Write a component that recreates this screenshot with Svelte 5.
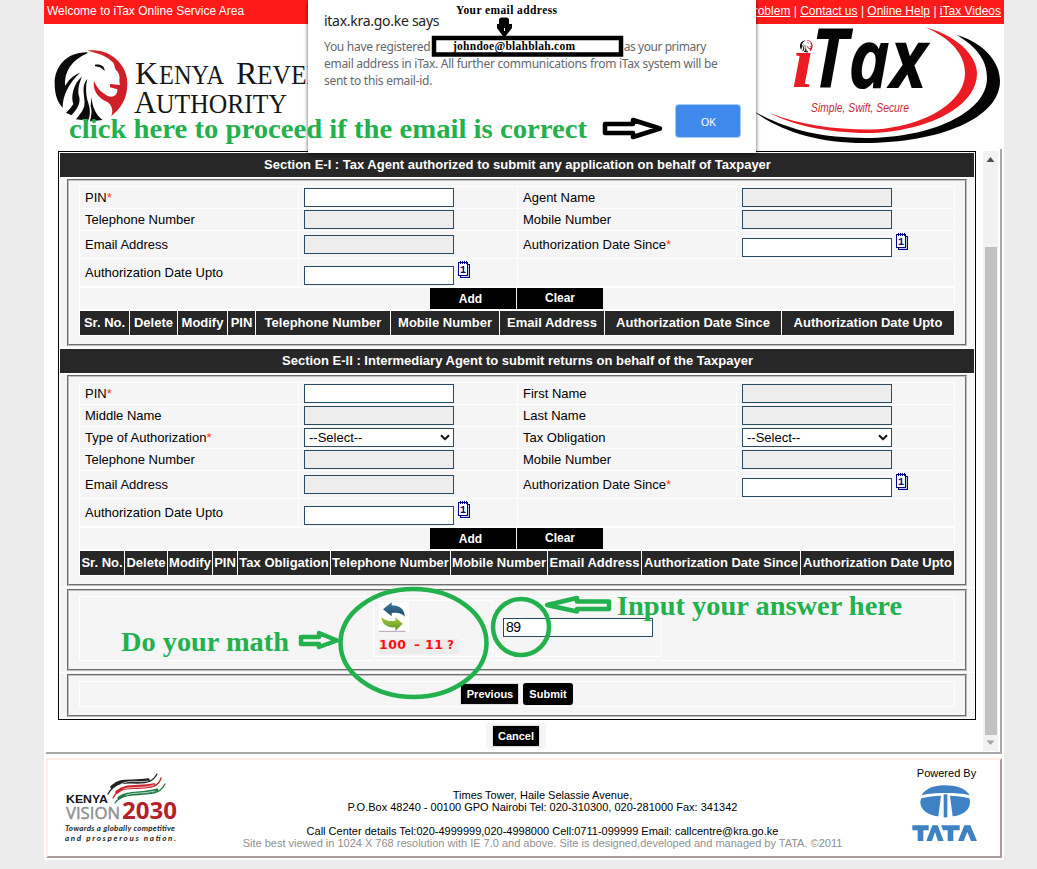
<script>
  const agent = [
    [{ label: 'PIN', req: true, kind: 'open' }, { label: 'Agent Name', kind: 'off' }],
    [{ label: 'Telephone Number', kind: 'off' }, { label: 'Mobile Number', kind: 'off' }],
    [{ label: 'Email Address', kind: 'off', tall: true }, { label: 'Authorization Date Since', req: true, kind: 'date', tall: true }],
    [{ label: 'Authorization Date Upto', kind: 'date', tall: true }, null]
  ];
  const intermediary = [
    [{ label: 'PIN', req: true, kind: 'open' }, { label: 'First Name', kind: 'off' }],
    [{ label: 'Middle Name', kind: 'off' }, { label: 'Last Name', kind: 'off' }],
    [{ label: 'Type of Authorization', req: true, kind: 'select' }, { label: 'Tax Obligation', kind: 'select' }],
    [{ label: 'Telephone Number', kind: 'off' }, { label: 'Mobile Number', kind: 'off' }],
    [{ label: 'Email Address', kind: 'off', tall: true }, { label: 'Authorization Date Since', req: true, kind: 'date', tall: true }],
    [{ label: 'Authorization Date Upto', kind: 'date', tall: true }, null]
  ];
  const sections = [
    {
      title: 'Section E-I : Tax Agent authorized to submit any application on behalf of Taxpayer',
      rows: agent,
      heads: [['Sr. No.', 49], ['Delete', 47], ['Modify', 49], ['PIN', 27], ['Telephone Number', 134], ['Mobile Number', 108], ['Email Address', 104], ['Authorization Date Since', 176], ['Authorization Date Upto', 172]]
    },
    {
      title: 'Section E-II : Intermediary Agent to submit returns on behalf of the Taxpayer',
      rows: intermediary,
      heads: [['Sr. No.', 44], ['Delete', 42], ['Modify', 44], ['PIN', 24], ['Tax Obligation', 92], ['Telephone Number', 119], ['Mobile Number', 96], ['Email Address', 93], ['Authorization Date Since', 158], ['Authorization Date Upto', 153]]
    }
  ];
</script>

{#snippet lion()}
  <path d="M262 157C200 156 164 200 164 250C164 285 173 308 188 323C188 290 202 254 240 218C216 228 206 240 195 258C192 215 215 180 262 160Z" fill="#0b0b0b" />
  <path d="M246 230C220 250 212 290 220 312C213 324 203 333 198 338L214 346C234 325 244 306 236 285C233 265 238 248 246 230Z" fill="#0b0b0b" />
  <path d="M262 237C240 262 258 294 253 318C246 338 236 347 228 358L264 362C275 340 268 318 262 300C258 280 256 258 262 237Z" fill="#0b0b0b" />
  <path d="M274 290C277 322 288 345 308 360L270 364C274 345 277 335 272 318Z" fill="#0b0b0b" />
  <path d="M262 152C325 142 382 190 382 250C382 298 362 326 334 348C342 328 333 308 314 302C290 288 278 268 282 242C290 262 302 276 322 287C340 296 354 284 352 268L330 262V252L360 255C355 240 364 230 352 214C340 204 348 192 333 182C316 166 290 158 262 152Z" fill="#cf2027" />
  <path d="M285 194C302 191 314 198 314 213C306 204 298 200 285 199Z" fill="#0b0b0b" />
{/snippet}

{#snippet control(f)}
  {#if f.kind === 'select'}
    <div class="box picker"><span>--Select--</span>
      <svg width="10" height="7" viewBox="0 0 10 7"><path d="M1 1.3L5 5.2L9 1.3" fill="none" stroke="#111" stroke-width="2" /></svg>
    </div>
  {:else}
    <div class="box {f.kind}"></div>
    {#if f.kind === 'date'}
      <svg class="cal" width="12" height="17" viewBox="0 0 12 17" shape-rendering="crispEdges">
        <rect x="2.5" y="3.5" width="9" height="13" fill="#c9c9ee" stroke="#00008b" />
        <rect x="0.5" y="1.5" width="9" height="13" fill="#fff" stroke="#00008b" />
        <path d="M2.5 0V3M4.5 0V3M6.5 0V3M8.5 0V3" stroke="#00008b" />
        <text x="2" y="11.5" font-size="10" font-weight="700" font-family="Liberation Mono" fill="#00008b">1</text>
      </svg>
    {/if}
  {/if}
{/snippet}

<div class="screen">
  <div class="page">
    <div class="topbar">
      <span class="welcome">Welcome to iTax Online Service Area</span>
      <nav><u>Problem</u> | <u>Contact us</u> | <u>Online Help</u> | <u>iTax Videos</u></nav>
    </div>

    <header>
      <svg class="kra" width="300" height="100" viewBox="0 0 300 100">
        <g transform="translate(0 3) scale(.33333)"><g transform="translate(-150 -135)">{@render lion()}</g></g>
        <g font-family="Liberation Serif" fill="#161616">
          <text x="85" y="42" font-size="32">K</text>
          <text x="109" y="42" font-size="27.5" textLength="65" lengthAdjust="spacingAndGlyphs">ENYA</text>
          <text x="186" y="42" font-size="32">R</text>
          <text x="207" y="42" font-size="27.5" textLength="68" lengthAdjust="spacingAndGlyphs">EVEN</text>
          <text x="84" y="71" font-size="31">A</text>
          <text x="106" y="71" font-size="27" textLength="131" lengthAdjust="spacingAndGlyphs">UTHORITY</text>
        </g>
      </svg>
      <svg class="itax" width="250" height="125" viewBox="752 24 250 125">
        <path d="M925 27C964 38 977 60 977 73C977 112 915 133 868 133C825 133 790 124 770 113C800 125 835 129.500 868 129.500C915 129.500 965 106 965 73C965 55 952 39 925 27Z" fill="#ec1c24" />
        <path d="M957 35C986 44 1000 63 1000 81C1000 118 940 143 864 143C815 143 778 130 752 110C782 128 818 138 866 138C930 138 987 113 987 78C987 61 978 48 957 35Z" fill="#050505" />
        <text x="811" y="88" font-family="Open Sans" font-weight="700" font-style="italic" font-size="82" textLength="116" lengthAdjust="spacingAndGlyphs" fill="#050505">Tax</text>
        <text x="792" y="87" font-family="Liberation Serif" font-weight="700" font-style="italic" font-size="73" textLength="22" lengthAdjust="spacingAndGlyphs" fill="#ec1c24">ı</text>
        <g transform="translate(800 40) scale(.058)"><g transform="translate(-164 -150)">{@render lion()}</g></g>
        <text x="811" y="112" font-family="Liberation Sans Narrow, Liberation Sans" font-style="italic" font-size="12.500" textLength="98" lengthAdjust="spacingAndGlyphs" fill="#cc2a33">Simple, Swift, Secure</text>
      </svg>
    </header>

    <main>
      <div class="content">
        <div class="form">
          {#each sections as s}
            <h2>{s.title}</h2>
            <div class="panel">
              <div class="group">
                <div class="fields">
                  {#each s.rows as row}
                    {#each row as f}
                      {#if f}
                        <div class="cell label" class:tall={f.tall}>{f.label}{#if f.req}<i>*</i>{/if}</div>
                        <div class="cell ctl {f.kind}" class:tall={f.tall}>{@render control(f)}</div>
                      {:else}
                        <div class="cell wide tall"></div>
                      {/if}
                    {/each}
                  {/each}
                </div>
                <div class="actions"><b>Add</b><b class="clear">Clear</b></div>
                <div class="heads">
                  {#each s.heads as [name, w]}<div style="width:{w}px">{name}</div>{/each}
                </div>
              </div>
            </div>
          {/each}
          <div class="panel third">
            <div class="group">
              <div class="captcha">
                <div class="question">
                  <svg width="30" height="30" viewBox="0 0 90 90">
                    <defs>
                      <linearGradient id="blue" x2="0" y2="1"><stop stop-color="#3f7ca0" /><stop offset="1" stop-color="#1c4a68" /></linearGradient>
                      <linearGradient id="lime" x2="0" y2="1"><stop stop-color="#a5c94b" /><stop offset="1" stop-color="#5f941d" /></linearGradient>
                    </defs>
                    <rect width="90" height="90" fill="#fff" />
                    <path d="M12 22L38 1V10C63 10 77 22 77 44C68 33 57 31 38 33V43Z" fill="url(#blue)" />
                    <path d="M71 65L49 87V76C25 78 8 66 7 45C18 56 31 58 49 56V46Z" fill="url(#lime)" />
                    <path d="M0 88H80" stroke="#b7a0bd" stroke-width="3" />
                  </svg>
                  <svg class="sum" width="80" height="15">
                    <g font-family="DejaVu Sans" font-weight="700" font-size="12.500" fill="#fb0d0d">
                      <text x="0" y="10" textLength="27">100</text>
                      <text x="35" y="10" textLength="6" lengthAdjust="spacingAndGlyphs">–</text>
                      <text x="46" y="10" textLength="18">11</text>
                      <text x="68" y="10" textLength="7" lengthAdjust="spacingAndGlyphs">?</text>
                    </g>
                  </svg>
                </div>
                <div class="answer"><div class="box open">89</div></div>
              </div>
            </div>
          </div>
          <div class="panel fourth">
            <div class="group">
              <div class="submits"><b class="prev">Previous</b><b class="submit">Submit</b></div>
            </div>
          </div>
        </div>
        <div class="cancel"><b>Cancel</b></div>
      </div>
      <div class="scroll">
        <svg width="15" height="16"><path d="M3.500 11L7.500 6L11.500 11Z" fill="#505050" /></svg>
        <div class="thumb"></div>
        <svg width="15" height="16"><path d="M3.500 5.500L7.500 10L11.500 5.500Z" fill="#a3a3a3" /></svg>
      </div>
    </main>

    <footer>
      <svg class="vision" width="130" height="80" viewBox="0 0 130 80">
        <g fill="none" stroke-linecap="round">
          <path d="M44 22C52 8 61 11 73 11C85 11 89 9 93 2" stroke="#222" stroke-width="1.300" />
          <path d="M48 15C57 6 66 11 84 8" stroke="#222" stroke-width="3.500" />
          <path d="M49 26C55 14 65 17 76 16C88 16 95 14 97 6" stroke="#c7242d" stroke-width="1.300" />
          <path d="M53 20C62 12 74 16 90 13" stroke="#c7242d" stroke-width="3.500" />
          <path d="M51 31C58 21 68 24 78 22C91 22 97 20 101 12" stroke="#1a7a42" stroke-width="1.300" />
          <path d="M55 26C64 19 77 23 93 18" stroke="#1a7a42" stroke-width="3" />
          <path d="M57 12C66 7 76 11 84 9M60 17C69 14 79 17 90 13M62 23C70 20 80 22 91 19" stroke="#fff" stroke-width=".7" />
        </g>
        <text x="2" y="31" font-family="Liberation Sans" font-weight="700" font-size="11" textLength="42" lengthAdjust="spacingAndGlyphs" fill="#151515">KENYA</text>
        <text x="2" y="47" font-family="Open Sans" font-size="17" textLength="54" lengthAdjust="spacingAndGlyphs" stroke="#8e9094" stroke-width=".5" fill="#8e9094">VISION</text>
        <text x="58" y="47" font-family="Open Sans" font-weight="700" font-size="24" textLength="55" lengthAdjust="spacingAndGlyphs" fill="#b51e2a">2030</text>
        <g font-family="Lato" font-style="italic" font-weight="700" font-size="8" fill="#262626">
          <text x="1" y="59" textLength="110">Towards a globally competitive</text>
          <text x="1" y="69" textLength="111">and prosperous nation.</text>
        </g>
      </svg>
      <div class="address">
        <p>Times Tower, Haile Selassie Avenue,</p>
        <p>P.O.Box 48240 - 00100 GPO Nairobi Tel: 020-310300, 020-281000 Fax: 341342</p>
        <p class="gap">Call Center details Tel:020-4999999,020-4998000 Cell:0711-099999 Email: callcentre@kra.go.ke</p>
        <p class="dim">Site best viewed in 1024 X 768 resolution with IE 7.0 and above. Site is designed,developed and managed by TATA. ©2011</p>
      </div>
      <div class="powered">
        <span>Powered By</span>
        <svg width="66" height="57" viewBox="0 0 198 171">
          <g fill="#3e82c4">
            <path d="M29 31C42 8 70 1 100 1S160 9 173 31C151 25 126 24 101 24S51 25 29 31Z" />
            <path d="M28 40C49 35 67 33 87 32L79 94C53 93 25 77 25 52C25 48 26 44 28 40Z" />
            <path d="M172 40C151 35 134 33 114 32L122 94C148 93 174 77 174 52C174 48 173 44 172 40Z" />
            <path d="M95 28H106V97H95Z" />
            <path d="M1 121H50V136H34V168H17V136H1Z" />
            <path d="M43 168L61 121H77L95 168H78L69 141L60 168Z" />
            <path d="M87 121H143V136H124V168H107V136H93Z" />
            <path d="M138 168L157 121H175L195 168H177L166 141L155 168Z" />
          </g>
        </svg>
      </div>
    </footer>
  </div>

  <div class="dialog">
    <h3>itax.kra.go.ke says</h3>
    <p><span class="l1a">You have registered</span><span class="l1b">as your primary</span></p>
    <p class="l2">email address in iTax. All further communications from iTax system will be</p>
    <p class="l3">sent to this email-id.</p>
    <button>OK</button>
  </div>

  <svg class="notes" width="1037" height="869" viewBox="0 0 1037 869">
    <g font-family="Liberation Serif" font-weight="700">
      <text x="456" y="14" font-size="11.500" textLength="101">Your email address</text>
      <path d="M499 19L501 17.500H507L509 19V24H512V28L505 37H503.500L497 28V24H499Z" />
      <path d="M504.500 28V31" stroke="#fff" />
      <rect x="434" y="38" width="187" height="16.500" fill="#fff" stroke="#000" stroke-width="4.500" />
      <text x="453" y="50" font-size="11.500" textLength="122">johndoe@blahblah.com</text>
      <path d="M605 124H633V120L660 128.500L633 137V133H605Z" fill="none" stroke="#000" stroke-width="4.500" stroke-linejoin="round" />
      <g fill="#22b14c" font-size="28">
        <text x="69" y="138" textLength="518" lengthAdjust="spacingAndGlyphs">click here to proceed if the email is correct</text>
        <text x="121" y="651" textLength="168" lengthAdjust="spacingAndGlyphs">Do your math</text>
        <text x="617" y="615" textLength="285" lengthAdjust="spacingAndGlyphs">Input your answer here</text>
      </g>
    </g>
    <g fill="none" stroke="#22b14c" stroke-width="4.500" stroke-linejoin="round">
      <ellipse cx="413.500" cy="643" rx="73" ry="54" />
      <ellipse cx="521" cy="627" rx="28" ry="28" />
      <path d="M301 637H319V633L337 640.500L319 647V644H301Z" />
      <path d="M609 601.500H577V598L547 605L577 611.500V609H609Z" />
    </g>
  </svg>
</div>

<style>
  :global(body) { margin: 0; background: #ececec; }
  .screen { position: relative; width: 1037px; height: 869px; overflow: hidden; background: #ececec; font: 13px/15px "Liberation Sans", Arial, sans-serif; color: #000; }
  .page { width: 960px; height: 860px; margin-left: 44px; background: #fff; display: flex; flex-direction: column; }
  .topbar { height: 24px; box-sizing: border-box; padding: 0 3px; background: #ff1a1a; color: #fff; font-size: 12px; line-height: 22px; display: flex; justify-content: space-between; }
  header { height: 125px; display: flex; justify-content: space-between; }
  .kra { margin: 18px 0 0 6px; }
  .itax { margin-right: 2px; }

  main { margin: 0 2px; width: 956px; height: 605px; box-sizing: border-box; border-right: 2px solid #a9a9a9; border-bottom: 2px solid #a9a9a9; display: flex; justify-content: space-between; }
  .content { padding: 2px 0 0 12px; }
  .form { width: 914px; height: 566px; border: 1px solid #000; padding: 1px 1px 0; }
  h2 { margin: 0 0 1px; height: 24px; background: #272727; color: #fff; font-size: 13px; line-height: 23px; text-align: center; text-indent: 1px; }
  .panel { background: #f5f5f5; padding: 1px 7px; margin-bottom: 2px; }
  .panel + .panel { margin-top: -1px; }
  .group { border: 2px groove #c0c0c0; padding: 5px 10px 8px; width: 876px; }
  .fields { display: grid; grid-template-columns: 218px 218px 218px 217px; gap: 1px; padding: 1px; background: #fff; }
  .cell { height: 21px; background: #f5f5f5; }
  .tall { height: 27px; }
  .wide { grid-column: span 2; }
  .label { padding-left: 5px; line-height: 21px; white-space: nowrap; }
  .label.tall { line-height: 27px; }
  .label i { color: #f33; font-style: normal; }
  .ctl { display: flex; align-items: flex-start; padding: 1px 0 0 5px; box-sizing: border-box; }
  .ctl.off.tall { padding-top: 4px; }
  .ctl.date { padding-top: 2px; }
  .ctl.date .box { margin-top: 5px; }
  .box { width: 150px; height: 19px; box-sizing: border-box; border: 1px solid #2a4a62; background: #fff; }
  .box.off { background: #ededed; }
  .ctl.off { background: #f5f5f5; }
  .cal { margin-left: 4px; }
  .picker { display: flex; justify-content: space-between; align-items: center; padding: 0 3px 0 4px; }
  .actions { border: 1px solid #fff; border-bottom-width: 2px; height: 21px; background: #f5f5f5; display: flex; justify-content: center; gap: 1px; padding-right: 1px; }
  .actions b { width: 86px; background: #000; color: #fff; font-size: 12px; line-height: 22px; text-align: center; }
  .actions b:first-child { text-indent: -5px; }
  .actions b.clear { line-height: 20px; }
  .heads { display: flex; gap: 1px; padding: 0 1px 1px; background: #fff; }
  .heads div { height: 24px; background: #272727; color: #fff; font-weight: 700; line-height: 24px; text-align: center; white-space: nowrap; }
  .third { margin-bottom: 1px; }
  .third .group { height: 65px; }
  .captcha { height: 63px; border: 1px solid #fff; display: flex; gap: 3px; padding-left: 293px; align-items: center; }
  .question { border: 1px solid #fff; width: 120px; height: 57px; box-sizing: border-box; padding: 1px 0 0 5px; display: flex; flex-direction: column; gap: 7px; }
  .sum { background: #ececec; overflow: visible; }
  .answer { border: 1px solid #fff; width: 165px; height: 57px; box-sizing: border-box; padding: 17px 0 0 6px; }
  .answer .box { padding-left: 2px; line-height: 17px; font-size: 14px; letter-spacing: -0.5px; }
  .panel.fourth { margin: 0; }
  .fourth .group { height: 26px; }
  .submits { height: 24px; border: 1px solid #fff; display: flex; justify-content: center; align-items: center; gap: 5px; }
  .submits b, .cancel b { background: #000; color: #fff; font-size: 11px; line-height: 20px; text-align: center; }
  .prev { width: 57px; height: 20px; outline: 1px solid #ddd; text-indent: 1px; }
  .submits .submit { width: 50px; height: 22px; line-height: 22px; border-radius: 3px; }
  .cancel { margin: 3px 0 0 428px; width: 60px; height: 25px; background: #f5f5f5; display: flex; justify-content: center; align-items: center; }
  .cancel b { width: 46px; height: 20px; outline: 1px solid #ddd; }
  .scroll { margin: 2px 2px 1px 0; width: 15px; background: #f1f1f1; display: flex; flex-direction: column; }
  .scroll svg { flex: none; }
  .thumb { margin: 80px 1px 0 2px; height: 488px; background: #c1c1c1; }

  footer { margin: 4px 2px 0; width: 956px; height: 100px; box-sizing: border-box; border: 2px solid #ffece5; border-right-color: #aa9d9b; border-bottom-color: #aa9d9b; display: grid; grid-template-columns: 130px 1fr 130px; font-size: 11px; }
  .vision { margin: 12px 0 0 16px; }
  .address { margin-top: 29px; text-align: center; white-space: nowrap; display: flex; flex-direction: column; align-items: center; padding-left: 37px; }
  .address p { margin: 0; line-height: 12px; }
  .address .gap { margin-top: 12px; }
  .dim { color: #8f8f8f; }
  .powered { display: flex; flex-direction: column; align-items: center; padding: 6px 0 0 20px; }
  .powered span { line-height: 14px; margin-bottom: 5px; margin-left: 3px; }

  .dialog { position: absolute; left: 308px; top: 0; width: 448px; height: 153px; box-sizing: border-box; padding: 12px 16px; background: #fff; box-shadow: 0 1px 4px rgba(0,0,0,.65); font-family: "Noto Sans", sans-serif; color: #65686c; font-size: 12px; display: flex; flex-direction: column; }
  h3 { margin: 0 0 8px; font-size: 14px; line-height: 18px; font-weight: 400; color: #222; white-space: nowrap; letter-spacing: -0.28px; }
  .dialog p { margin: 0; line-height: 17px; height: 17px; white-space: nowrap; display: flex; justify-content: space-between; }
  .l1a, .l2 { letter-spacing: -0.29px; }
  .l1b { margin-right: 34px; letter-spacing: -0.45px; }
  .l3 { letter-spacing: -0.28px; }
  .dialog button { margin: 16px 0 0; align-self: flex-end; width: 64px; height: 32px; border: 0; border-radius: 3px; background: #3f89ec; color: #fff; font: 11px "Noto Sans", sans-serif; box-shadow: 0 0 0 1px #a9cbf7; letter-spacing: -0.4px; }
  .notes { position: absolute; left: 0; top: 0; pointer-events: none; }
</style>
